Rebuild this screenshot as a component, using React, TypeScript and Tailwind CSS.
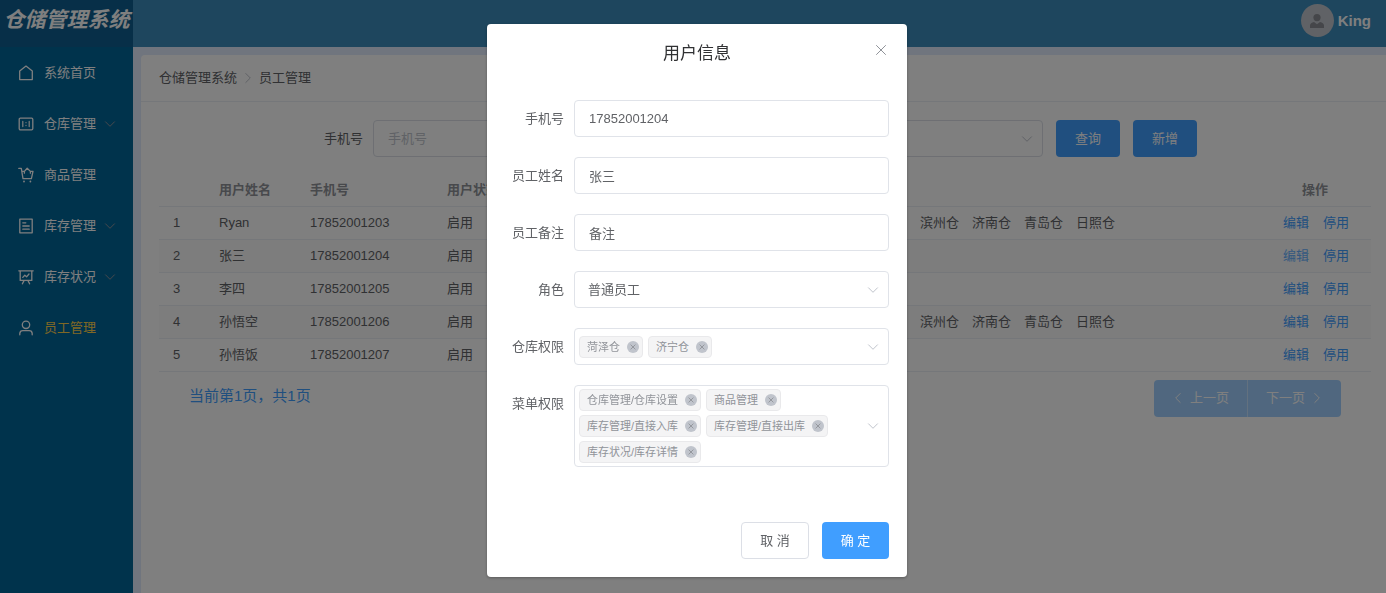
import type { ReactNode } from 'react';

const line = { fill: 'none', stroke: 'currentColor', strokeWidth: 1.1, strokeLinejoin: 'round', strokeLinecap: 'round' } as const;

function Icon({ children }: { children: ReactNode }) {
  return (
    <svg viewBox="0 0 16 16" className="size-4 shrink-0" aria-hidden="true" {...line} strokeWidth={1.3}>
      {children}
    </svg>
  );
}

const Chevron = ({ className = '' }: { className?: string }) => (
  <svg viewBox="0 0 12 12" className={`size-3 shrink-0 ${className}`} aria-hidden="true" {...line} strokeWidth={1}>
    <path d="M1.5 3.8 6 8.3l4.5-4.5" />
  </svg>
);

const menu = [
  { label: '系统首页', icon: <path d="M1.7 14.6V5.9L8 1.1l6.3 4.8v8.7z" /> },
  { label: '仓库管理', sub: true, icon: <><rect x="1.2" y="2.2" width="13.6" height="11.6" rx="1.2" /><path d="M4.8 5.4v5.2M11.2 5.4v5.2M8 6.5v.2M8 9.4v.2" strokeWidth="1.2" /></> },
  { label: '商品管理', icon: <><path d="M.8 1.4h2.5L5 11.6h8.4l1.6-7.2h-2.6L9.2 1.2 6.4 4.4H3.8M6.4 4.4v1.8M12.4 4.4v1.8" /><path d="M6 14.4v.2M12.4 14.4v.2" strokeWidth="1.8" /></> },
  { label: '库存管理', sub: true, icon: <path d="M1.8 1.2h12.4v13.6H1.8zM4.8 4.8h3M4.8 8h6.4M4.8 11.2h6.4" /> },
  { label: '库存状况', sub: true, icon: <path d="M.8 1.8h14.4M2.2 1.8v9.6h11.6V1.8M4.8 8.4l2-2.2 1.8 1.6 2.4-2.8M4.4 14.8l1.6-3.2M11.6 14.8 10 11.6" /> },
  { label: '员工管理', active: true, icon: <><circle cx="8" cy="4.8" r="3.7" /><path d="M1.8 14.8v-1.4a3 3 0 0 1 3-2.8h6.4a3 3 0 0 1 3 2.8v1.4" /></> },
];

const depots = '滨州仓　济南仓　青岛仓　日照仓';
const rows = [
  { name: 'Ryan', phone: '17852001203', depots },
  { name: '张三', phone: '17852001204', depots: '' },
  { name: '李四', phone: '17852001205', depots: '' },
  { name: '孙悟空', phone: '17852001206', depots },
  { name: '孙悟饭', phone: '17852001207', depots: '' },
];

function Sidebar() {
  return (
    <aside className="flex w-[133px] shrink-0 flex-col bg-[#006699]">
      <h1 className="flex h-[47px] items-center justify-center bg-[#0f5f90] pb-2 text-[21px] font-bold whitespace-nowrap text-white italic">
        仓储管理系统
      </h1>
      <nav>
        {menu.map((m) => (
          <a key={m.label} href="#" className="flex h-[51px] items-center pl-[18px] text-white">
            <Icon>{m.icon}</Icon>
            <span className={m.active ? 'ml-[10px] text-[#ffd04b]' : 'ml-[10px]'}>{m.label}</span>
            {m.sub && <Chevron className="ml-2 text-[#909399]" />}
          </a>
        ))}
      </nav>
    </aside>
  );
}

function Page() {
  return (
    <div className="flex min-h-screen">
      <Sidebar />
      <div className="flex min-w-0 flex-1 flex-col bg-[#e0ebfc]">
        <header className="flex h-[47px] items-center justify-end gap-1 bg-[#3c8dbc] pr-[15px] pb-[6px] text-[15px] font-bold text-white">
          <span className="flex size-[33px] items-center justify-center rounded-full bg-[#c0c4cc]">
            <svg viewBox="0 0 16 16" className="size-4 fill-[#8a8d94]" aria-hidden="true">
              <circle cx="8" cy="4.6" r="3.6" />
              <path d="M1 15v-2.4c0-2 1.8-3.2 4-3.6L8 11.2 11 9c2.2.4 4 1.6 4 3.6V15z" />
            </svg>
          </span>
          King
        </header>
        <main className="mt-2 ml-2 flex-1 rounded-tl bg-white">
          <div className="flex h-[47px] items-center border-b border-[#ebeef5] pl-[18px]">
            <a href="#">仓储管理系统</a>
            <Chevron className="mx-[5px] -rotate-90 text-[#c0c4cc]" />
            <span>员工管理</span>
          </div>
          <form className="flex items-center pt-[18px] pl-[183px]">
            <label htmlFor="q-phone" className="mr-[10px]">手机号</label>
            <input id="q-phone" placeholder="手机号" className="h-[37px] w-[200px] rounded border border-[#dcdfe6] px-[14px] placeholder:text-[#c0c4cc]" />
            <div className="ml-auto flex h-[37px] items-center rounded border border-[#dcdfe6] pr-[9px]">
              <select aria-label="用户状态" className="w-[188px] appearance-none px-[14px]"><option></option></select>
              <Chevron className="text-[#c0c4cc]" />
            </div>
            <button type="button" className="ml-[13px] h-[37px] w-16 rounded bg-[#409eff] text-white">查询</button>
            <button type="button" className="mr-[189px] ml-[13px] h-[37px] w-16 rounded bg-[#409eff] text-white">新增</button>
          </form>
          <div className="pt-[18px] pr-[15px] pl-[18px]">
            <table className="w-full table-fixed text-left">
              <colgroup>
                <col className="w-[60px]" /><col className="w-[91px]" /><col className="w-[137px]" /><col className="w-[473px]" /><col /><col className="w-[110px]" />
              </colgroup>
              <thead className="text-[#909399]">
                <tr className="h-[31px] border-b border-[#ebeef5]">
                  <th></th><th>用户姓名</th><th>手机号</th><th>用户状态</th><th></th>
                  <th className="pr-[2px] text-center">操作</th>
                </tr>
              </thead>
              <tbody>
                {rows.map((r, i) => (
                  <tr key={r.phone} className="h-[33px] border-b border-[#ebeef5] even:bg-[#fafafa]">
                    <td className="pl-[14px]">{i + 1}</td>
                    <td>{r.name}</td>
                    <td>{r.phone}</td>
                    <td>启用</td>
                    <td>{r.depots}</td>
                    <td className="text-center">
                      <span className="inline-flex gap-[14px] text-[#409eff]">
                        <button type="button" className={i === 1 ? 'text-[#66b1ff]' : ''}>编辑</button>
                        <button type="button">停用</button>
                      </span>
                    </td>
                  </tr>
                ))}
              </tbody>
            </table>
          </div>
          <div className="flex items-start justify-between pt-2 pr-[45px] pl-12">
            <p className="pt-1 text-[15px] leading-6 text-[#409eff]">当前第1页，共1页</p>
            <div className="flex h-[37px] divide-x divide-[#c6e2ff] overflow-hidden rounded bg-[#a0cfff] text-white">
              <button type="button" className="flex w-[94px] items-center justify-center gap-[6px]">
                <Chevron className="rotate-90" />上一页
              </button>
              <button type="button" className="flex w-[93px] items-center justify-center gap-[6px]">
                下一页<Chevron className="-rotate-90" />
              </button>
            </div>
          </div>
        </main>
      </div>
    </div>
  );
}

function Field({ label, id, children }: { label: string; id: string; children: ReactNode }) {
  return (
    <div className="flex">
      <label htmlFor={id} className="w-[69px] shrink-0 pr-[10px] text-right leading-[37px]">{label}</label>
      {children}
    </div>
  );
}

function TagSelect({ id, tags }: { id: string; tags: string[] }) {
  return (
    <div className="flex min-h-[37px] flex-1 items-center rounded border border-[#e0e3e9] py-[3px] pr-[9px] pl-1">
      <ul className="flex flex-1 flex-wrap gap-x-[5px] gap-y-[4px]">
        {tags.map((t, i) => (
          <li key={t} className="flex h-[22px] items-center rounded border border-[#e9e9eb] bg-[#f4f4f5] pr-[3px] pl-[7px] text-[11px] text-[#909399]">
            {t}
            <button type="button" id={i === 0 ? id : undefined} aria-label={`移除 ${t}`} className="ml-[7px]">
              <svg viewBox="0 0 12 12" className="size-3" aria-hidden="true">
                <circle cx="6" cy="6" r="6" fill="#c0c4cc" />
                <path d="M3.6 3.6l4.8 4.8M8.4 3.6 3.6 8.4" stroke="#909399" strokeWidth=".9" />
              </svg>
            </button>
          </li>
        ))}
      </ul>
      <Chevron className="text-[#c0c4cc]" />
    </div>
  );
}

const input = 'h-[37px] min-w-0 flex-1 rounded border border-[#e0e3e9] px-[14px]';

function UserDialog() {
  return (
    <section role="dialog" aria-modal="true" aria-labelledby="dlg-title" className="relative mt-6 w-[420px] self-start rounded-sm bg-white px-[18px] pb-[18px] shadow-[0_1px_3px_rgba(0,0,0,0.3)]">
      <h2 id="dlg-title" className="pt-[18px] text-center text-[17px] leading-6 text-[#303133]">用户信息</h2>
      <button type="button" aria-label="关闭" className="absolute top-5 right-5 text-[#909399]">
        <svg viewBox="0 0 12 12" className="size-3" aria-hidden="true" {...line} strokeWidth={1}>
          <path d="M1.5 1.5l9 9M10.5 1.5l-9 9" />
        </svg>
      </button>
      <form>
        <div className="flex flex-col gap-5 pt-[34px]">
          <Field label="手机号" id="phone"><input id="phone" className={input} defaultValue="17852001204" /></Field>
          <Field label="员工姓名" id="name"><input id="name" className={input} defaultValue="张三" /></Field>
          <Field label="员工备注" id="note"><input id="note" className={input} defaultValue="备注" /></Field>
          <Field label="角色" id="role">
            <div className="flex h-[37px] flex-1 items-center rounded border border-[#e0e3e9] pr-[9px]">
              <select id="role" className="h-full flex-1 appearance-none px-[13px]"><option>普通员工</option></select>
              <Chevron className="text-[#c0c4cc]" />
            </div>
          </Field>
          <Field label="仓库权限" id="depots"><TagSelect id="depots" tags={['菏泽仓', '济宁仓']} /></Field>
          <Field label="菜单权限" id="menus">
            <TagSelect id="menus" tags={['仓库管理/仓库设置', '商品管理', '库存管理/直接入库', '库存管理/直接出库', '库存状况/库存详情']} />
          </Field>
        </div>
        <div className="flex justify-end gap-[13px] pt-[55px]">
          <button type="button" className="h-[37px] w-[68px] rounded border border-[#dcdfe6]">取 消</button>
          <button type="submit" className="h-[37px] w-[67px] rounded bg-[#409eff] text-white">确 定</button>
        </div>
      </form>
    </section>
  );
}

export default function App() {
  return (
    <div className="font-['Liberation_Sans','Noto_Sans_CJK_SC',sans-serif] text-[13px] leading-[18px] text-[#606266]">
      <Page />
      <div className="fixed inset-0 flex justify-center overflow-auto bg-black/50 pl-2">
        <UserDialog />
      </div>
    </div>
  );
}
